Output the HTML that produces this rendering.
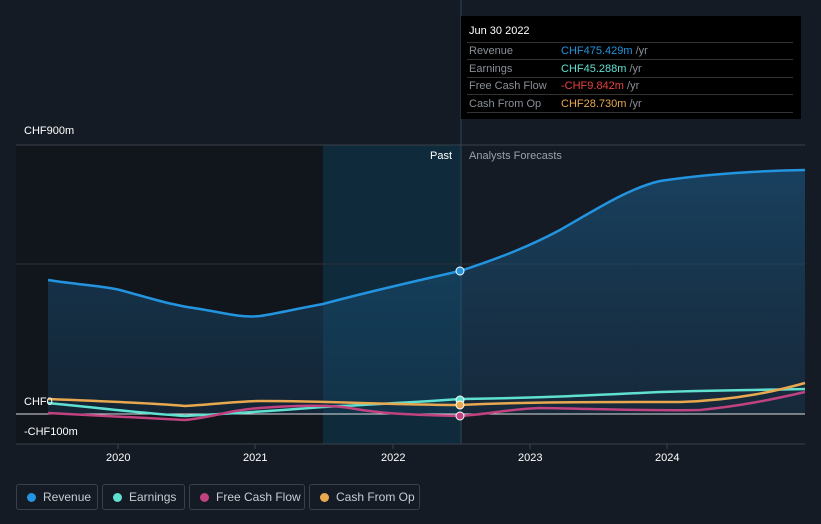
<!DOCTYPE html>
<html><head><style>
body{margin:0;width:821px;height:524px;background:#151b25;font-family:"Liberation Sans",sans-serif;overflow:hidden;position:relative}
.t{position:absolute;font-size:11px;color:#fff}
.leg{position:absolute;top:484px;height:26px;border:1px solid #3a404a;border-radius:3px;box-sizing:border-box;color:#c8ccd2;font-size:12px;line-height:24px;padding-left:26px}
.leg i{position:absolute;left:10px;top:8px;width:9px;height:9px;border-radius:50%}
</style></head><body>
<svg width="821" height="524" style="position:absolute;left:0;top:0">
<defs>
<linearGradient id="rg" x1="0" y1="0" x2="0" y2="1"><stop offset="0" stop-color="#1a5f8e" stop-opacity=".55"/><stop offset="1" stop-color="#1a4a6e" stop-opacity=".3"/></linearGradient>
</defs>
<rect x="16" y="145" width="307" height="299" fill="#11151c"/>
<rect x="323" y="145" width="138" height="299" fill="#0f2a3a"/>
<line x1="461" y1="0" x2="461" y2="444" stroke="#2b4a5c" stroke-width="1"/>
<line x1="16" y1="145" x2="805" y2="145" stroke="#3a404a"/>
<line x1="16" y1="264" x2="805" y2="264" stroke="#2a3038"/>
<path d="M48,280 C80,285 105,286 120,290 C150,298 170,305 200,309 C225,313 240,318 260,316 C275,314 290,310 323,304 C360,294 420,280 460,271 C500,258 530,246 560,230 C600,207 630,188 660,181 C700,175 750,171 805,170 L805,414 L48,414 Z" fill="url(#rg)"/>
<path d="M48,280 C80,285 105,286 120,290 C150,298 170,305 200,309 C225,313 240,318 260,316 C275,314 290,310 323,304 C360,294 420,280 460,271 C500,258 530,246 560,230 C600,207 630,188 660,181 C700,175 750,171 805,170" fill="none" stroke="#2394df" stroke-width="2.5"/>
<line x1="16" y1="414" x2="805" y2="414" stroke="#ddd" stroke-width="1"/>
<line x1="16" y1="444" x2="805" y2="444" stroke="#3a404a"/>
<path d="M48,403 C100,408 150,414 185,416 C220,414 260,412 323,407 C380,404 420,402 460,399 C540,398 600,395 660,392 C720,390 760,390 805,389" fill="none" stroke="#5fe0d0" stroke-width="2.5"/>
<path d="M48,413 C100,416 150,418 185,420 C210,418 230,410 260,408 C300,405 330,405 350,408 C380,414 420,415 460,416 C490,414 510,409 540,408 C600,409 650,411 700,410 C740,406 770,400 805,392" fill="none" stroke="#c0427f" stroke-width="2.5"/>
<path d="M48,399 C100,401 150,403 185,406 C220,404 240,401 260,401 C300,401 330,402 360,403 C400,404 430,405 460,405 C520,402 600,402 680,402 C740,400 780,390 805,383" fill="none" stroke="#e8a84f" stroke-width="2.5"/>
<circle cx="460" cy="271" r="4" fill="#2394df" stroke="#fff" stroke-width="1"/>
<circle cx="460" cy="400" r="4" fill="#5fe0d0" stroke="#fff" stroke-width="1"/>
<circle cx="460" cy="405" r="4" fill="#e8a84f" stroke="#fff" stroke-width="1"/>
<circle cx="460" cy="416" r="4" fill="#c0427f" stroke="#fff" stroke-width="1"/>
<g stroke="#3a404a"><line x1="118" y1="444" x2="118" y2="449"/><line x1="255" y1="444" x2="255" y2="449"/><line x1="393" y1="444" x2="393" y2="449"/><line x1="530" y1="444" x2="530" y2="449"/><line x1="667" y1="444" x2="667" y2="449"/></g>
</svg>
<div class="t" style="left:24px;top:125px">CHF900m</div>
<div class="t" style="left:24px;top:396px">CHF0</div>
<div class="t" style="left:24px;top:426px">-CHF100m</div>
<div class="t" style="left:430px;top:150px">Past</div>
<div class="t" style="left:469px;top:150px;color:#9aa0a8">Analysts Forecasts</div>
<div class="t" style="left:106px;top:452px">2020</div>
<div class="t" style="left:243px;top:452px">2021</div>
<div class="t" style="left:381px;top:452px">2022</div>
<div class="t" style="left:518px;top:452px">2023</div>
<div class="t" style="left:655px;top:452px">2024</div>
<div style="position:absolute;left:461px;top:16px;width:340px;height:103px;background:#000;font-size:11px;color:#8a9098">
<div style="position:absolute;left:8px;top:9px;color:#fff">Jun 30 2022</div>
<div style="position:absolute;left:6px;right:8px;top:26px;border-top:1px solid #333"></div>
<div style="position:absolute;left:8px;top:27px;line-height:17.5px">Revenue<br>Earnings<br>Free Cash Flow<br>Cash From Op</div>
<div style="position:absolute;left:100px;top:27px;line-height:17.5px"><span style="color:#2394df">CHF475.429m</span> /yr<br><span style="color:#5fe0d0">CHF45.288m</span> /yr<br><span style="color:#e84040">-CHF9.842m</span> /yr<br><span style="color:#e8a84f">CHF28.730m</span> /yr</div>
<div style="position:absolute;left:6px;right:8px;top:43px;border-top:1px solid #333"></div>
<div style="position:absolute;left:6px;right:8px;top:61px;border-top:1px solid #333"></div>
<div style="position:absolute;left:6px;right:8px;top:78px;border-top:1px solid #333"></div>
<div style="position:absolute;left:6px;right:8px;top:96px;border-top:1px solid #333"></div>
</div>
<div class="leg" style="left:16px;width:82px"><i style="background:#2394df"></i>Revenue</div>
<div class="leg" style="left:102px;width:83px"><i style="background:#5fe0d0"></i>Earnings</div>
<div class="leg" style="left:189px;width:116px"><i style="background:#c0427f"></i>Free Cash Flow</div>
<div class="leg" style="left:309px;width:111px"><i style="background:#e8a84f"></i>Cash From Op</div>
</body></html>
